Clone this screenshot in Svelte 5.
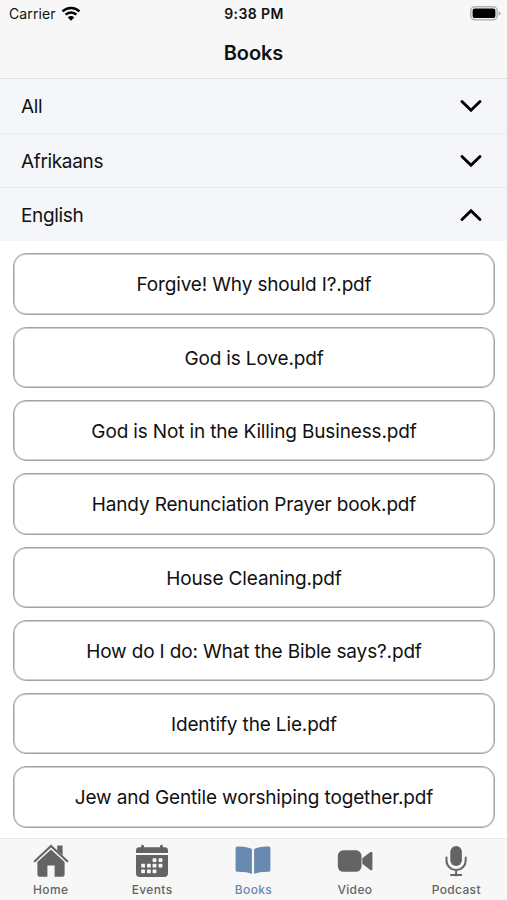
<script lang="ts">
  type Section = { name: string; open: boolean };

  let sections = $state<Section[]>([
    { name: 'All', open: false },
    { name: 'Afrikaans', open: false },
    { name: 'English', open: true }
  ]);

  const books = [
    'Forgive! Why should I?.pdf',
    'God is Love.pdf',
    'God is Not in the Killing Business.pdf',
    'Handy Renunciation Prayer book.pdf',
    'House Cleaning.pdf',
    'How do I do: What the Bible says?.pdf',
    'Identify the Lie.pdf',
    'Jew and Gentile worshiping together.pdf'
  ];

  const tabs = ['Home', 'Events', 'Books', 'Video', 'Podcast'];
  let active = $state('Books');

  // day squares on the calendar icon
  const days = [
    [18.6, 14.2], [24.6, 14.2],
    [7.2, 19.8], [13, 19.8], [18.6, 19.8], [24.6, 19.8],
    [7.2, 25.4], [13, 25.4], [18.6, 25.4]
  ];
</script>

<div class="screen">
  <header>
    <div class="status">
      <div class="carrier">
        <span>Carrier</span>
        <svg width="20" height="16" viewBox="0 0 20 16">
          <g fill="none" stroke="#000" stroke-width="2.5">
            <path d="M1.5 5.4a12.2 12.2 0 0 1 17 0" />
            <path d="M4.6 8.7a7.8 7.8 0 0 1 10.8 0" />
          </g>
          <path d="M10 14.7 6.8 11.4a4.6 4.6 0 0 1 6.4 0z" />
        </svg>
      </div>
      <span class="clock">9:38 PM</span>
      <svg class="battery" width="31" height="15" viewBox="0 0 31 15">
        <rect x=".8" y=".8" width="26.4" height="13" rx="4" fill="#f7f7f7" stroke="#b3b3b3" stroke-width="1.5" />
        <rect x="2.6" y="2.5" width="22.8" height="9.6" rx="2.2" />
        <path d="M28.6 5.2q2 .8 2 2.2t-2 2.2z" fill="#aaa" />
      </svg>
    </div>
    <h1>Books</h1>
  </header>

  <main>
    {#each sections as section}
      <button class="section" onclick={() => (section.open = !section.open)}>
        <span>{section.name}</span>
        <svg class:up={section.open} width="24" height="16" viewBox="0 0 24 16">
          <path d="M3 3.5 12 12.2 21 3.5" fill="none" stroke="#000" stroke-width="2.9" stroke-linecap="round" />
        </svg>
      </button>
    {/each}

    <ul>
      {#each books as book}
        <li>{book}</li>
      {/each}
    </ul>
  </main>

  <nav>
    {#each tabs as tab}
      <button class="tab" class:active={active === tab} onclick={() => (active = tab)}>
        <svg width="36" height="34" viewBox="0 0 36 34" fill="currentColor">
          {#if tab === 'Home'}
            <path d="M24.2 1.6h5.4v9.8l-5.4-4.9z" />
            <path d="M1.7 17.2 18 2l16.3 15.2" fill="none" stroke="currentColor" stroke-width="2.1" stroke-linecap="round" />
            <path d="M18 5.4 31.6 18v12.6q0 2.2-2.2 2.2h-7.8V21.6h-7.2v11.2H6.6q-2.200 0-2.200-2.200V18z" />
          {:else if tab === 'Events'}
            <path d="M2 9V6.6q0-3.300 3.300-3.300h1.800V2.200a1.400 1.400 0 0 1 2.800 0v1.100h16.200V2.200a1.400 1.400 0 0 1 2.800 0v1.100h1.800q3.300 0 3.300 3.300V9z" />
            <path d="M2 11h32v18.200q0 3.800-3.800 3.800H5.800Q2 33 2 29.200z" />
            {#each days as [x, y]}
              <rect {x} {y} width="3.8" height="3.8" rx=".7" fill="#f7f7f7" />
            {/each}
          {:else if tab === 'Books'}
            <path d="M.6 4q0-1.500 1.500-1.500 9.500-.5 14.800 2.600V30Q11.500 27.500 2 27.700.6 27.700.6 26.300z" />
            <path d="M35.400 4q0-1.500-1.500-1.500-9.500-.5-14.800 2.600V30q5.400-2.500 14.900-2.300 1.400 0 1.400-1.400z" />
          {:else if tab === 'Video'}
            <rect x=".8" y="6.3" width="23.7" height="21.5" rx="5.5" />
            <path d="M25.300 14.300 33 8.200q2.400-1.500 2.400 1v15.600q0 2.500-2.400 1l-7.700-6.100z" />
          {:else}
            <rect x="12.3" y="2" width="11.6" height="20" rx="5.8" />
            <path d="M8.500 13.500v3a9.600 9.600 0 0 0 19.200 0v-3M18.100 26v5.500M13 31h10.200" fill="none" stroke="currentColor" stroke-width="2" stroke-linecap="round" />
          {/if}
        </svg>
        <span>{tab}</span>
      </button>
    {/each}
  </nav>
</div>

<style>
  :global(body) {
    background: #fff;
  }

  .screen {
    display: flex;
    flex-direction: column;
    height: 900px;
    overflow: hidden;
    color: #111;
    font-family: Inter, 'Liberation Sans', sans-serif;
  }

  header {
    flex: none;
    box-sizing: border-box;
    height: 79px;
    background: #f7f7f7;
    border-bottom: 1px solid #dedfe1;
  }

  .status {
    display: grid;
    grid-template-columns: 1fr auto 1fr;
    align-items: center;
    height: 27px;
    padding: 0 6px 0 9px;
    font-size: 14px;
  }

  .carrier {
    display: flex;
    align-items: center;
    gap: 5px;
    letter-spacing: 0.1px;
  }

  .clock {
    font-weight: 600;
    letter-spacing: 0.4px;
    margin-right: 2px;
  }

  .battery {
    justify-self: end;
  }

  h1 {
    margin: 0;
    font-size: 20px;
    font-weight: 600;
    line-height: 52px;
    text-align: center;
    letter-spacing: -0.1px;
  }

  main {
    flex: 1;
    min-height: 0;
    overflow: hidden;
  }

  button {
    border: 0;
    font-family: inherit;
    color: inherit;
  }

  .section {
    box-sizing: border-box;
    display: flex;
    align-items: center;
    justify-content: space-between;
    width: 100%;
    height: 54px;
    padding: 0 24px 0 21px;
    background: #f4f6fa;
    font-size: 19px;
    letter-spacing: -0.35px;
  }

  .section span {
    padding-top: 1px;
  }

  .section + .section {
    border-top: 1px solid #e9ebee;
  }

  .up {
    transform: rotate(180deg);
  }

  ul {
    display: flex;
    flex-direction: column;
    gap: 12px;
    margin: 0;
    padding: 12.4px 12px 12px 13px;
    list-style: none;
  }

  li {
    box-sizing: border-box;
    height: 61.3px;
    border: 1px solid #a3a3a3;
    border-radius: 13px;
    box-shadow: inset 0 0 0 1px #cfcfcf;
    font-size: 19px;
    line-height: 61px;
    letter-spacing: -0.15px;
    text-align: center;
    white-space: nowrap;
  }

  nav {
    flex: none;
    box-sizing: border-box;
    display: grid;
    grid-template-columns: repeat(5, 1fr);
    height: 62px;
    background: #f7f7f7;
    border-top: 1px solid #e8e8e8;
  }

  .tab {
    display: flex;
    flex-direction: column;
    align-items: center;
    padding: 5px 0 0;
    background: none;
    color: #646464;
    font-size: 12px;
    font-weight: 500;
    letter-spacing: 0.35px;
  }

  .tab span {
    margin-top: 4px;
  }

  .active {
    color: #6889b0;
  }
</style>
